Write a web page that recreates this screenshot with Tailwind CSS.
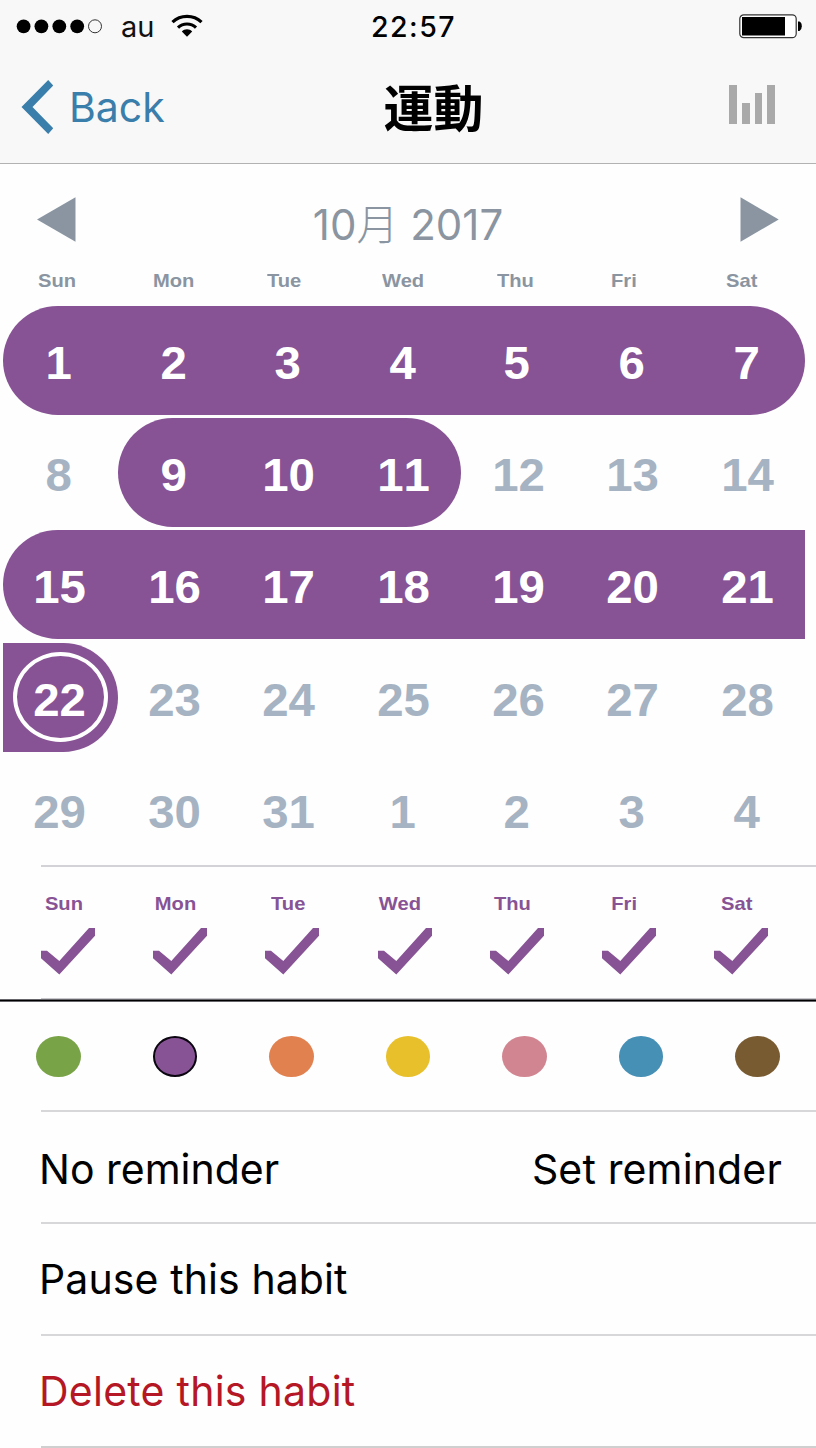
<!DOCTYPE html>
<html lang="en">
<head>
<meta charset="utf-8">
<title>運動</title>
<script src="https://cdn.jsdelivr.net/npm/@tailwindcss/browser@4"></script>
</head>
<body class="w-[816px] h-[1448px] overflow-hidden bg-[#fefefe] font-['Inter','Noto_Sans_CJK_JP',sans-serif] text-black">
<header class="h-[164px] bg-[#f8f8f8] border-b border-[#b2b2b2]">
  <div class="h-[52px] grid grid-cols-3 items-center pl-4 pr-[14px]">
    <div class="flex items-center">
      <svg class="w-[88px] h-4" viewBox="0 0 88 16"><circle cx="7.600" cy="8.300" r="6.900"/><circle cx="25.400" cy="8.300" r="6.900"/><circle cx="43.300" cy="8.300" r="6.900"/><circle cx="61.200" cy="8.300" r="6.900"/><circle cx="79" cy="8.300" r="6.500" fill="none" stroke="#333"/></svg>
      <span class="ml-[17px] w-[35px] text-[29px] leading-none whitespace-nowrap text-[#111]">au</span>
      <svg class="ml-[15px] w-8 h-6" viewBox="0 0 32 24" fill="none" stroke="#000" stroke-width="3.200"><path d="M1.500 8.200C9.500 .3 22.500 .3 30.500 8.200"/><path d="M7 13.600C12 8.800 20 8.800 25 13.600"/><path d="M10.800 17.400C13.500 14.500 18.500 14.500 21.200 17.400L16 22.800Z" fill="#000" stroke="none"/></svg>
    </div>
    <div class="flex justify-center pl-[9px] pt-[2px]"><span class="text-[28.500px] leading-none font-medium tracking-[1.500px]">22:57</span></div>
    <div class="flex justify-end"><svg class="w-[63px] h-[25px]" viewBox="0 0 63 25"><rect x=".8" y=".8" width="56.400" height="22.900" rx="4" fill="#fff" stroke="#333" stroke-width="1.200"/><rect x="3" y="3" width="43" height="18.500"/><path d="M59 7.500H60.500Q62.800 8.500 62.800 12.200T60.500 17H59Z"/></svg></div>
  </div>
  <div class="h-[109px] grid grid-cols-[1fr_auto_1fr] items-center pl-[21px] pr-[41px]">
    <div class="flex items-center text-[#3a7eab]">
      <svg class="w-8 h-[54px]" viewBox="0 0 32 54"><path d="M27.200 0L32.300 5.500L11.500 27L32.300 48.200L27.200 54L.5 27Z" fill="currentColor"/></svg>
      <span class="ml-[16px] pt-[2px] text-[41px] leading-none">Back</span>
    </div>
    <div class="pl-[71px] pb-[4px]"><h1 class="text-[50px] leading-none font-bold font-['Noto_Sans_CJK_JP',sans-serif] whitespace-nowrap">運動</h1></div>
    <div class="flex justify-end items-end gap-[5px] h-[39px] -mt-[4px]"><i class="w-[7.700px] h-full bg-[#a9a9a9]"></i><i class="w-[7.700px] h-[21px] bg-[#a9a9a9]"></i><i class="w-[7.700px] h-[31px] bg-[#a9a9a9]"></i><i class="w-[7.700px] h-full bg-[#a9a9a9]"></i></div>
  </div>
</header>
<main>
  <section class="h-[701px]">
    <div class="h-[97px] pt-[33px] pl-[37px] pr-[37px] flex justify-between items-start text-[#8a95a1]">
      <svg class="w-[39px] h-[45px]" viewBox="0 0 39 45"><path d="M0 22.500L38.500 .3V44.700Z" fill="currentColor"/></svg>
      <h2 class="mt-[7px] text-[42px] leading-none whitespace-nowrap">10<span class="font-light">月</span> 2017</h2>
      <svg class="w-[39px] h-[45px]" viewBox="0 0 39 45"><path d="M38.700 22.500L.5 .3V44.700Z" fill="currentColor"/></svg>
    </div>
    <div id="head" class="h-[45px] pt-[5.500px] pl-[38px] flex text-[#8a95a1] font-['Liberation_Sans',sans-serif] font-bold text-[19px]"></div>
    <div id="days" class="pl-[3px] w-[805.300px] grid grid-cols-7 gap-y-[3.200px] font-['Liberation_Sans',sans-serif] font-bold text-[46px] leading-none [font-kerning:none]"></div>
  </section>
  <section class="h-[133px] ml-[41px] border-t-2 border-[#d3d3d7]">
    <div id="week" class="flex pt-[24px] text-[#875395] font-['Liberation_Sans',sans-serif] font-bold text-[19px]"></div>
  </section>
  <div class="h-[1px] ml-[41px] bg-[#c8c8cc]"></div>
  <div class="h-[3px] border-t border-b border-[#66666a] bg-black"></div>
  <section id="dots" class="h-[108px] flex items-center justify-between pl-[36px] pr-[36px]"></section>
  <section class="ml-[41px] text-[41px] leading-none">
    <div class="h-[112px] border-t-2 border-[#d7d7da] flex items-center justify-between pr-[34px] pt-[4px]"><span class="-ml-[2px] whitespace-nowrap">No reminder</span><span class="tracking-[.15px] whitespace-nowrap">Set reminder</span></div>
    <div class="h-[112px] border-t-2 border-[#d7d7da] flex items-center"><span class="-ml-[2px] tracking-[.1px] whitespace-nowrap">Pause this habit</span></div>
    <div class="h-[112px] border-t-2 border-[#d7d7da] flex items-center text-[#b51724]"><span class="-ml-[2px] tracking-[.25px] whitespace-nowrap">Delete this habit</span></div>
    <div class="border-t-2 border-[#cfcfcf]"></div>
  </section>
</main>
<script>
const names = ['Sun','Mon','Tue','Wed','Thu','Fri','Sat'];
document.getElementById('head').innerHTML = names.map(n => `<div class="w-[114.700px] shrink-0"><span class="inline-block origin-left scale-x-[1.06]">${n}</span></div>`).join('');

const filled = { 0:'rounded-l-full', 6:'rounded-r-full', 8:'rounded-l-full', 10:'rounded-r-full', 14:'rounded-l-full', 21:'rounded-r-full' };
const isOn = i => i < 7 || (i > 7 && i < 11) || (i > 13 && i < 22);
document.getElementById('days').innerHTML = Array.from({length:35}, (_, i) => {
  const d = i < 31 ? i + 1 : i - 30;
  const tone = isOn(i) ? 'bg-[#875395] text-white' : 'text-[#a6b3c2]';
  const nudge = d < 10 ? 'mr-[3px]' : 'mr-[1px]';
  const ring = i === 21 ? '<i class="absolute left-[9.500px] top-[9.500px] w-[95px] h-[90px] rounded-[50%] border-[4px] border-white"></i>' : '';
  return `<div class="relative h-[109px] flex items-center justify-center pt-[5px] ${tone} ${filled[i] || ''}">${ring}<span class="inline-block scale-x-[1.03] ${nudge}">${d}</span></div>`;
}).join('');

document.getElementById('week').innerHTML = names.map(n => `<div class="w-[112.200px] shrink-0"><div class="w-[45px] flex justify-center leading-[25px]"><span class="inline-block scale-x-[1.06]">${n}</span></div><svg class="mt-[12px] w-[54px] h-[47px]" viewBox="0 0 54 47"><path d="M0 22.700H6L18.300 33L48 0H54V7.800L18.300 46.500L0 30.200Z" fill="currentColor"/></svg></div>`).join('');

const colors = ['bg-[#79a347]','bg-[#875395] border-2 border-[#0b0610]','bg-[#e18150]','bg-[#e7c02c]','bg-[#d18591]','bg-[#468fb5]','bg-[#795b32]'];
document.getElementById('dots').innerHTML = colors.map(c => `<i class="w-[44.500px] h-[41px] rounded-[50%] ${c}"></i>`).join('');
</script>
</body>
</html>
